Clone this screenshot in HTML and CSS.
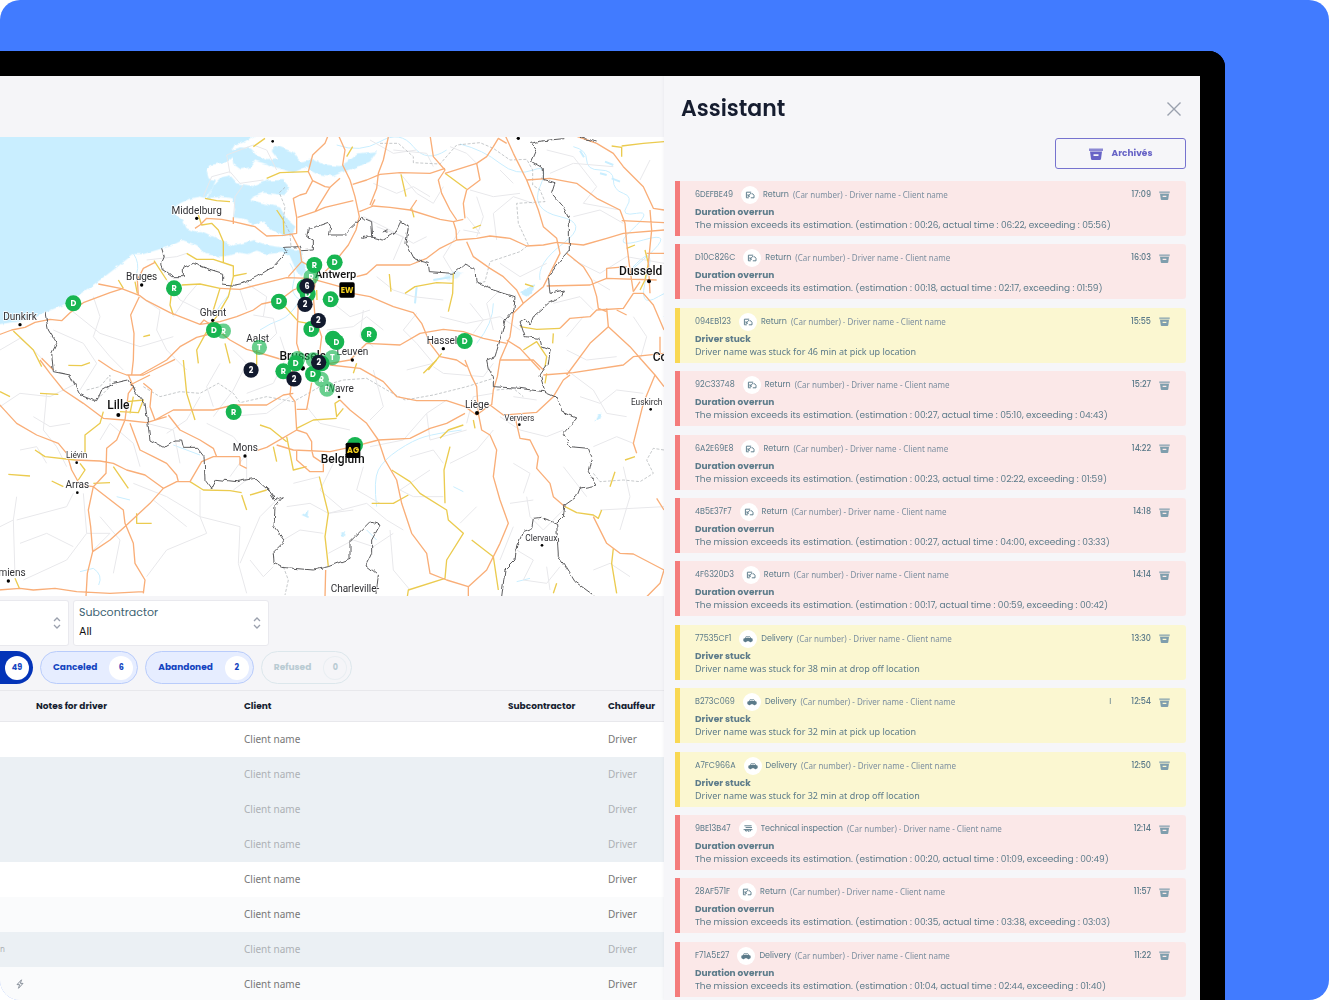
FILE: index.html
```html
<!DOCTYPE html>
<html lang="en">
<head>
  <meta charset="UTF-8" />
  <title>Dispatch - Assistant</title>
  <meta name="viewport" content="width=device-width, initial-scale=1.0" />
  <link rel="stylesheet" href="styles.css">
</head>
<body>

  <!-- Icons -->
  <svg class="sprite" aria-hidden="true">
    <symbol id="i-archive" viewBox="0 0 14 12">
      <path d="M0 .5h14V3H0z" opacity=".75" />
      <path fill-rule="evenodd" d="M1 3.500h12l-1 7.500q-.2 1-1.200 1H3.200q-1 0-1.200-1zM4.500 6.200v1.800h5V6.200z" />
    </symbol>
    <symbol id="i-return" viewBox="0 0 12 10">
      <path d="M4.500 8.500H1.500V1.500H7.500M8 3.500h1.500l1.500 2v3H7M3.500 6.500l4-4M3.500 4v2.500H6" fill="none" stroke="currentColor" stroke-width="1.200" />
    </symbol>
    <symbol id="i-car" viewBox="0 0 14 10">
      <path fill-rule="evenodd" d="M3 3.500L4.200 1h5.300l1.700 2.500 2.300 1V8h-1.200a1.800 1.800 0 0 1-3.500 0H5.200a1.800 1.800 0 0 1-3.500 0H.5V4.500zM4.300 3.500h2.200V2H5zM7.500 3.500h2.400L9 2H7.500z" />
      <circle cx="3.500" cy="8" r="1.200" /><circle cx="10.500" cy="8" r="1.200" />
    </symbol>
    <symbol id="i-tech" viewBox="0 0 12 10">
      <path d="M1.500 1h9M3 3.200h8M.5 5.800h11M3 5.800v1.700h2V5.800M7 5.800v3M9 5.800v2" fill="none" stroke="currentColor" stroke-width="1.200" />
    </symbol>
    <symbol id="i-sort" viewBox="0 0 8 12">
      <path d="M1 4l3-3 3 3M1 8l3 3 3-3" fill="none" stroke="currentColor" stroke-width="1.300" />
    </symbol>
  </svg>

  <div class="stage">
    <div class="device">

      <main class="board">
        <svg class="map" viewBox="0 21 1992 1377" role="img" aria-label="Map of Belgium">
          <defs>
            <filter id="rough" x="0" y="0" width="100%" height="100%">
              <feTurbulence type="fractalNoise" baseFrequency="0.05" numOctaves="2" seed="4" />
              <feDisplacementMap in="SourceGraphic" scale="12" xChannelSelector="R" yChannelSelector="G" />
            </filter>
          </defs>
          <rect y="21" width="1992" height="1377" fill="#fff" />

          <!-- sea and delta -->
          <g class="water" filter="url(#rough)">
            <path d="M-10 10H775L735 34 704 45 694 62 700 78 684 92 655 101 628 106 620 124 626 146 648 150 640 168 628 188 616 204 598 200 570 206 540 220 520 235 530 258 548 270 560 295 584 305 604 303 640 320 700 347 740 336 760 330 800 345 850 353 905 362 918 420 905 440 890 425 870 380 850 368 800 372 770 362 745 372 720 368 690 376 660 380 620 372 590 345 548 330 512 348 485 356 430 372 400 372 350 412 300 450 240 492 200 520 135 548 90 563 60 574 -10 584Z" />
            <path d="M694 62L720 52 752 55 775 78 800 90 835 88 815 60 832 48 880 66 900 95 940 88 970 104 1020 108 1050 90 1075 70 1130 64 1110 95 1070 112 1030 125 1000 138 950 132 915 112 880 128 845 118 800 102 765 92 750 112 722 118 700 102Z" />
            <path d="M640 168L665 142 690 136 712 160 760 168 800 152 850 150 868 172 850 195 790 188 760 200 752 210 800 222 840 232 862 270 886 290 876 312 850 318 815 300 790 275 760 285 740 268 700 262 705 235 698 205 660 200 620 206Z" />
            <path d="M1330 440L1360 424 1390 425 1372 445 1345 452Z" opacity="0.5" />
            <path d="M1560 490L1590 470 1605 462 1600 480 1580 500Z" />
            <path d="M1784 875L1794 850 1808 848 1800 868ZM905 1155L928 1140 925 1165ZM1024 1204h14l-4 18-10-4z" />
          </g>
          <g class="river">
            <path d="M1010 45Q1080 70 1140 35T1240 50 1340 60M1380 42Q1450 60 1500 100T1600 120 1620 170 1680 260 1690 340 1620 450" />
            <path d="M1720 50Q1760 60 1760 90T1800 120 1840 150 1870 190 1880 230 1910 250 1895 300 1930 330 1940 380 1910 400 1940 440 1975 500 1992 560" />
            <path d="M870 400q20 30 10 60t20 50M780 600q30-20 60-30t60-60M640 560q20-40 50-70M400 370q20 30 10 60" />
            <path d="M1130 1130q-10-80 5-110t60-60 80-40 110-20M1480 520q0 60-50 120" />
            <path d="M240 1325l40-10q30 20 16 50M350 1100l40 10M520 945l80 30M1550 1355l40-10M1360 1070l30 15M1100 1200l30 30" />
            <path d="M1740 62l12 20M1815 95l25 10M1800 130l20 5M1835 145l25 10M1250 470l-5 50M1300 450l50-8" stroke-width="6" />
          </g>

          <!-- minor roads -->
          <g class="minor">
            <path d="M690 130L680 75 720 60 760 45 800 60 830 120M610 200L635 140 690 125 720 160 790 150M700 275L705 200 730 165M440 390L530 380 560 370M520 560L560 500 590 465M280 500L300 560 280 620 330 680 370 720M0 660L60 625 90 650 130 690M420 500L480 540 470 600 500 660 560 720" />
            <path d="M760 555L820 565 830 610 800 640M700 660L740 700 700 780 640 860M720 480L740 540M980 600L1060 590 1100 560 1150 600M1000 520L1050 560 1110 540M1090 260L1170 300 1240 340 1280 320M1090 540L1080 620 1120 650" />
            <path d="M1200 130L1250 190 1300 220 1330 170M1350 50L1400 70 1430 100M1410 180L1480 200 1560 190M1390 300L1440 310 1400 260M1490 330L1480 250 1540 200 1600 220M1380 300L1330 380 1360 430M1500 400L1560 440 1640 400M1180 60L1280 70 1300 110" />
            <path d="M1640 60L1720 80 1790 170 1750 220 1860 240M1650 130L1720 100 1840 110M1720 260L1800 240 1870 280M1720 390L1800 430 1880 380 1992 400M1660 520L1740 500 1780 540M1700 660L1760 690 1850 680M1560 600L1500 560 1400 580 1320 560" />
            <path d="M1250 550L1210 600 1250 640 1300 700 1220 720M1480 600L1460 520 1500 480M0 830L60 790 150 800 230 760M140 790L130 900 170 950 200 1010M50 1100L40 1170 0 1190M50 1170L200 1130 220 1090M40 1170L45 1340M250 1090L260 1210 200 1290 70 1350" />
            <path d="M280 1260L330 1210 260 1210M400 1060L500 1100 600 1160 720 1190M720 1190L715 1300 740 1390M600 1160L620 1210 500 1260 440 1340M600 1080L600 1160M830 1110L780 1160 720 1300M440 880L520 900 540 1000M620 880L700 920 740 970 690 1040" />
            <path d="M680 860L800 850 870 800M740 980L740 1050 700 1080M860 1130L930 1120 985 1150 1060 1140M985 1150L1100 1120 1160 1170 1210 1200M820 1310L790 1340 750 1290M880 1060L960 1040M985 1270L1060 1230 1120 1250 1180 1210" />
            <path d="M1170 1200L1180 1320 1230 1380M1110 950L1210 930 1280 850 1340 810M1280 850L1290 930 1400 900M1330 1100L1240 1100 1200 1080 1290 1020M1430 1130L1380 1180M1530 1120L1600 1110M1500 860L1560 900 1640 920 1690 900M1120 720L1150 830 1110 870" />
            <path d="M1580 1100L1590 1160 1630 1200 1690 1140M1550 1260L1600 1290 1570 1350 1640 1360 1680 1310M1500 1290L1540 1190M1640 1310L1650 1380M1780 1320L1830 1300 1890 1340M1800 1140L1992 1130M1780 950L1850 920 1900 940M1740 800L1800 820 1850 780 1930 790" />
            <path d="M1700 720L1780 780 1820 850 1880 860M1300 710L1330 730 1450 740 1480 700M1610 810L1540 800M1350 1000L1430 960 1480 900M1690 1010L1760 1100M1400 880L1420 800 1480 790M1860 1200L1890 1100 1870 1010M1540 1000L1590 1030 1570 1090" />
            <path d="M200 530L300 610 420 650 520 620M160 600L250 640 290 700 240 780M500 450L540 510 600 540M740 460L800 500 790 560M840 620L860 680 820 760 740 790M1110 30L1180 70 1250 60M1120 160L1190 190 1240 170 1290 200M1130 290L1210 320 1180 390M1430 200L1450 260 1430 320" />
            <path d="M1500 120L1540 160M1750 560L1700 620M1830 480L1780 450M1900 560L1940 620 1920 690M1950 90L1920 150M1130 440L1180 480 1240 500 1330 510M1410 520L1450 570 1420 610M100 860L150 890 210 880M60 960L110 950 140 1000M300 930L330 880 400 940 420 1010" />
            <path d="M600 800L560 870 500 910M660 700L620 770 640 830M920 830L960 880 1050 900M1000 1000L960 1080 1030 1140M1090 1010L1070 1080 1140 1120M60 1240L140 1210 220 1250M300 1160L360 1230 340 1330M460 1110L560 1190M850 1230L900 1200 970 1210M1230 980L1300 960 1330 1000" />
          </g>

          <!-- region limits -->
          <g class="limit">
            <path d="M855 172L838 188 855 230 850 270 870 310 873 352M1140 40L1195 40 1240 80 1240 98 1320 102 1370 45 1440 38 1480 55 1530 90 1580 88 1598 120 1598 165 1620 180 1635 215 1550 220 1555 280 1585 345 1560 365 1470 395 1455 455 1428 460" />
            <path d="M260 780L300 770 330 735 330 770 290 810M430 770L480 800 540 785 600 790 655 760 700 790 720 818 800 800 880 815 960 770 1030 750 1100 745 1160 780 1215 810 1300 795 1400 770 1480 745" />
            <path d="M1490 780L1540 775 1570 800M1780 1030L1800 1055 1870 1050 1920 1055 1960 1030 1940 990 1960 955 1992 960M850 1310L865 1350 855 1395" />
          </g>

          <!-- secondary roads -->
          <g class="second">
            <path d="M615 205L650 212 690 215M800 145L840 128 925 125M760 50L795 25M595 255L605 285 635 280 655 300 670 335 670 400M560 370L590 388 640 388 700 408 700 440 685 500 650 560 625 590M545 465L600 462 660 475 640 540M515 485L510 525 520 555M462 392L500 450M620 605L590 660 595 700M675 640L690 700M855 530L895 575 925 580M830 240L850 270 852 312M355 450L370 475M405 455L412 490M700 438L740 430M40 603L60 622 100 660 125 710M430 620l20-5M770 660v45" />
            <path d="M1203 133L1218 200M1335 130L1400 178M1235 235L1242 262M1215 490L1245 470 1310 458 1360 460M1360 430L1358 490 1345 545M1168 432L1173 485M1835 48L1865 52 1865 80M1865 48L1930 40 1992 35M1575 462L1600 470M1560 590L1610 598 1680 595M1570 660L1610 635 1640 680 1635 710M1880 355L1905 345M1935 360L1945 400 1935 450 1920 480M1325 670L1285 720M1660 610L1658 640M1040 80L1058 50M1418 295l25-10M950 480l1 30" />
            <path d="M0 785L30 800M120 790L175 793M205 706L245 707 270 698M550 690L560 790 585 870M310 845L300 880 255 915 255 970M105 960L135 980 225 990M25 1033L90 1038M155 1053L190 1070M240 1000L255 1020 235 1050M340 1010L385 1075M280 1060L330 1058M410 1150L410 1180 455 1180M570 1055L610 1080 690 1082 725 1088M725 1095L740 1140M750 1095L800 1080M780 885L810 895 860 935M820 950L830 995M860 920L880 1020 920 1010M890 895L940 870 1010 865M958 1040L975 1110 985 1150 975 1220 985 1310M45 1345L58 1375M360 845L415 848 430 810 380 815M390 850L400 800" />
            <path d="M1175 1020L1230 1055 1260 1090 1340 1140 1345 1170 1390 1210 1340 1290 1335 1345 1225 1380 1222 1400M1415 1230L1480 1280 1495 1380M1350 950L1332 1020 1335 1120M1115 1120L1180 1120 1225 1095M1320 925L1345 900 1390 885M1695 1130L1730 1148 1780 1155 1795 1165 1805 1140M1840 1255L1835 1300 1850 1390M1875 990L1905 980M1845 1025L1830 1070M1270 730L1310 690M1020 810L1005 820 1010 860 1030 835M1060 730L1070 700M1660 1390l10-30M1635 760l5-30M1420 870l5 25" />
          </g>

          <!-- motorways -->
          <g class="motorway">
            <path d="M-5 615L35 600 75 592 105 577 150 568 185 572 210 548 250 518 290 503 330 488 370 475M295 462L365 476 420 497 440 512 510 548 600 583 612 570 640 590 690 630 740 658 790 672 850 690M415 497L412 450 430 415 465 397M418 500L392 555 402 610 400 690 395 735M600 583L660 575 710 560 760 540 785 522 840 510 880 480 920 465M420 735L500 690 540 650 590 622 630 612M660 475L720 478 790 460 860 443 930 445 1020 470M585 295L600 285 620 265 665 268 700 275 765 290 800 318 850 316 890 310 890 262 880 205 900 195 918 190 938 152 925 125 938 75 975 40 985 15M938 152L975 170 990 172 1020 145M990 172L945 245 893 262M945 245L975 232 1060 212M875 312L900 360 905 395 865 440M905 395L950 420 940 500 945 560 965 620 955 700M895 520L890 640 905 690M700 262v20" />
            <path d="M1015 15L1035 60 1028 105 1050 150 1065 200 1078 260 1068 300 1045 345 1005 395 960 440M1058 163L1100 150 1140 133 1200 128 1290 130 1335 115M1165 21L1150 90 1135 130 1130 175 1110 225M1078 245L1120 228 1170 232 1230 240 1320 268 1360 275 1390 268M1230 240l20-30M1360 275L1368 300 1370 330M1070 440L1100 432 1130 405 1230 405 1280 385 1320 355 1370 330 1430 325 1470 318 1530 325 1580 348 1630 345 1670 337 1750 345 1820 325 1870 310 1992 300M1040 487L1110 500 1180 530 1240 548 1265 580 1290 640 1320 680 1370 690 1400 710M990 700L1050 690 1100 640 1200 645 1260 610 1330 598 1390 605 1450 625 1520 640" />
            <path d="M1290 15L1300 80 1335 120 1315 150 1325 190 1350 240 1370 270M1335 130L1430 100 1460 80 1480 50 1495 25 1520 40M1430 100L1440 150 1400 180 1390 220 1395 265M1515 15L1540 70 1560 110 1580 150 1600 200 1615 240 1630 290 1670 325 1680 370 1630 470 1570 520 1540 550 1530 620 1500 690 1492 740 1480 780 1475 825M1400 335L1420 380 1470 415 1510 440 1550 480 1570 520M1580 150L1650 145 1730 160 1790 205 1860 240 1875 280 1880 340 1890 420 1900 485M1640 468L1770 465 1820 445 1970 450M1700 370L1750 410 1775 450 1790 500 1795 535 1820 545M1680 595L1710 565 1770 560 1790 540 1870 535 1900 490 1930 490 1960 525 1992 600" />
            <path d="M1720 15L1790 40 1840 70 1870 110 1930 170 1960 235 1992 240M1865 272L1992 278M1950 240L1955 300 1945 400 1950 490M1820 535L1825 590 1770 640 1700 735M1825 590L1890 650 1925 690 1965 735 1930 820 1900 940 1910 970M1965 735L1992 770M1992 670L1900 680 1870 705 1720 728 1630 735M1500 690L1570 690 1600 690 1630 720M1520 630L1560 655 1620 720M1820 445v-30l60-5M1850 540l30 15M1980 690v-70M1900 485l20-30M1940 370h52M1115 228l10-20" />
            <path d="M120 690L150 730 190 780 250 820 310 865 370 870 440 878 500 860M-5 820L50 880 110 915 175 940 200 970 215 1020 240 1065M125 685L160 720M295 690L340 720 380 735 430 735 460 720 525 688M385 735L400 770 385 790 375 870 350 930 320 955 318 1030 280 1070 265 1140 272 1190 278 1265M390 765L450 735M430 760L455 780 450 830 465 870 520 840 580 840 640 840 700 825 800 825 850 795 880 790M880 700L870 795 885 815 890 900 800 952 770 962M720 980L640 980 605 995 570 1055 530 1055 490 1075 450 1120 380 1185 330 1230 278 1265 262 1330 258 1400M390 880L420 960 460 980 500 1000 530 1035 535 1055M225 990L300 993 340 1000 380 1020 435 1035 490 1075M505 855L540 900 600 930 640 955 650 980M240 1065L280 1070 370 1140 375 1180 400 1240 405 1300 435 1350 430 1390M-5 1380L60 1375 100 1380 165 1375 230 1385 330 1390 430 1385" />
            <path d="M890 900L920 910 935 935 935 960M830 945L880 960 990 965 1060 950 1135 930 1230 925 1290 895 1340 880 1395 850M890 960L890 990 930 1025 970 1025 970 1000 940 980 935 960M977 1320L975 1400M890 838h30l15-80M990 705L1080 715 1150 755 1190 800 1250 812 1340 812 1395 830 1430 855 1470 825 1510 855 1610 847 1660 800 1690 750 1710 735M1020 810L1050 840 1100 880 1135 930 1155 990 1190 1050 1205 1120 1235 1210 1280 1270 1290 1330 1340 1350 1405 1370 1405 1400M1395 690L1415 740 1430 770 1435 850 1445 900 1470 915 1490 960 1480 1040 1500 1110 1525 1180 1500 1240 1460 1320 1405 1370M1545 860L1560 925 1590 930 1615 980 1610 1015 1650 1060 1660 1100 1695 1130M1780 1160L1820 1240 1860 1270 1900 1272 1992 1320 1980 1360 1940 1400M1970 1105L1992 1140M720 980v25l20 10" />
          </g>

          <!-- country borders -->
          <g class="border" filter="url(#rough)">
            <path d="M485 355L493 380 485 398 490 420 515 440 550 440 550 412 580 400 620 415 668 430 668 462 700 466 730 460 770 440 820 410 860 365 850 352 900 350 905 362 940 360 940 330 920 320 925 298 985 277 992 290 988 315 1040 315 1050 295 1085 262 1115 275 1118 320 1085 325 1088 315 1150 330 1185 310 1202 275 1225 290 1218 340 1245 390 1285 400 1288 425 1360 430 1395 402 1425 415 1428 455 1480 480 1545 500 1542 540 1515 570 1500 630 1485 680 1460 690 1465 715 1480 740 1480 770 1560 775 1630 785 1665 800 1695 850 1730 865 1690 910 1710 950 1765 955 1775 980 1765 1025 1790 1065 1740 1075 1730 1100 1695 1125 1690 1160 1670 1180 1625 1162 1600 1165 1595 1195 1570 1205 1550 1250 1545 1290 1515 1320 1505 1400M1670 1180L1675 1280 1700 1315 1725 1355 1780 1395" />
            <path d="M1592 40L1610 60 1595 95 1630 115 1630 148 1665 158 1655 190 1690 230 1708 270 1708 360 1690 380 1645 440 1650 490 1690 480 1685 500 1645 520 1600 560 1590 585 1575 565 1560 575 1575 620 1620 625 1625 650 1650 660 1645 700 1620 735 1635 785M1592 40L1630 32 1690 26M1740 22L1790 36M1150 305l12-6 2 12z" />
            <path d="M135 548L145 600 170 640 155 670 160 725 210 735 240 795 290 815 305 780 340 760 385 750 410 790 435 820 445 890 450 930 490 952 525 930 545 930 550 952 590 952 612 980 615 1050 635 1077 650 1048 710 1055 765 1045 810 1085 825 1110 850 1100 825 1130 822 1190 855 1235 820 1270 822 1300 845 1312 940 1320 985 1310 1050 1285 1050 1235 1110 1175 1140 1185 1115 1230 1115 1270 1098 1305 1135 1335 1128 1395" />
          </g>

          <!-- towns -->
          <g class="town-dot">
            <circle cx="818" cy="34" r="4" /><circle cx="590" cy="265" r="5" /><circle cx="425" cy="465" r="5" /><circle cx="60" cy="584" r="5" />
            <circle cx="638" cy="571" r="5" /><circle cx="1057" cy="690" r="5" /><circle cx="1330" cy="656" r="5" /><circle cx="1947" cy="454" r="6" />
            <circle cx="355" cy="855" r="6" /><circle cx="230" cy="998" r="4" /><circle cx="232" cy="1088" r="4" /><circle cx="25" cy="1353" r="5" />
            <circle cx="735" cy="978" r="5" /><circle cx="1017" cy="801" r="4" /><circle cx="1431" cy="849" r="6" /><circle cx="1558" cy="884" r="4" />
            <circle cx="1626" cy="1246" r="4" /><circle cx="1952" cy="838" r="4" /><circle cx="1555" cy="25" r="5" /><circle cx="908" cy="715" r="7" />
          </g>
          <g class="town">
            <text x="590" y="251">Middelburg</text>
            <text x="425" y="451">Bruges</text>
            <text x="60" y="570">Dunkirk</text>
            <text x="639" y="557">Ghent</text>
            <text x="773" y="635">Aalst</text>
            <text x="1057" y="676">Leuven</text>
            <text x="1326" y="642">Hassel</text>
            <text x="736" y="963">Mons</text>
            <text x="232" y="1074">Arras</text>
            <text x="36" y="1339">miens</text>
            <text x="1020" y="787">Wavre</text>
            <text x="1431" y="833">Liège</text>
            <text x="1065" y="1385">Charleville-</text>
          </g>
          <g class="town small">
            <text x="230" y="984">Liévin</text>
            <text x="1558" y="872">Verviers</text>
            <text x="1624" y="1232">Clervaux</text>
            <text x="1940" y="825">Euskirch</text>
          </g>
          <g class="town big">
            <text x="1007" y="445" class="mid">Antwerp</text>
            <text x="355" y="838">Lille</text>
            <text x="908" y="691">Brussels</text>
            <text x="1028" y="999">Belgium</text>
            <text x="1922" y="434">Dusseld</text>
            <text x="1980" y="693">Co</text>
          </g>

          <!-- vehicles -->
          <g class="pin light">
            <g transform="translate(933 441)"><circle r="23" /><text y="8">R</text></g>
            <g transform="translate(670 603)"><circle r="23" /><text y="8">R</text></g>
            <g transform="translate(778 652)"><circle r="23" /><text y="8">T</text></g>
            <g transform="translate(997 683)"><circle r="23" /><text y="8">T</text></g>
            <g transform="translate(893 686)"><circle r="23" /></g>
            <g transform="translate(940 690)"><circle r="23" /></g>
            <g transform="translate(964 748)"><circle r="23" /><text y="8">R</text></g>
            <g transform="translate(981 777)"><circle r="23" /><text y="8">R</text></g>
          </g>
          <g class="pin">
            <g transform="translate(943 405)"><circle r="24" /><text y="8">R</text></g>
            <g transform="translate(1004 397)"><circle r="24" /><text y="8">D</text></g>
            <g transform="translate(913 472)"><circle r="24" /></g>
            <g transform="translate(923 492)"><circle r="24" /><text y="8">D</text></g>
            <g transform="translate(992 508)"><circle r="24" /><text y="8">D</text></g>
            <g transform="translate(837 515)"><circle r="24" /><text y="8">D</text></g>
            <g transform="translate(934 597)"><circle r="24" /><text y="8">D</text></g>
            <g transform="translate(522 475)"><circle r="24" /><text y="8">R</text></g>
            <g transform="translate(220 520)"><circle r="24" /><text y="8">D</text></g>
            <g transform="translate(642 600)"><circle r="24" /><text y="8">D</text></g>
            <g transform="translate(999 626)"><circle r="24" /></g>
            <g transform="translate(1009 636)"><circle r="24" /><text y="8">D</text></g>
            <g transform="translate(1107 614)"><circle r="24" /><text y="8">R</text></g>
            <g transform="translate(1394 633)"><circle r="24" /><text y="8">D</text></g>
            <g transform="translate(887 700)"><circle r="24" /><text y="8">D</text></g>
            <g transform="translate(965 700)"><circle r="24" /></g>
            <g transform="translate(850 724)"><circle r="24" /><text y="8">R</text></g>
            <g transform="translate(939 732)"><circle r="24" /><text y="8">D</text></g>
            <g transform="translate(701 846)"><circle r="24" /><text y="8">R</text></g>
            <g transform="translate(1065 945)"><circle r="24" /></g>
          </g>
          <g class="pin cluster">
            <g transform="translate(921 468)"><circle r="23" /><text y="8">6</text></g>
            <g transform="translate(915 523)"><circle r="23" /><text y="8">2</text></g>
            <g transform="translate(955 572)"><circle r="23" /><text y="8">2</text></g>
            <g transform="translate(956 697)"><circle r="23" /><text y="8">2</text></g>
            <g transform="translate(882 747)"><circle r="23" /><text y="8">2</text></g>
            <g transform="translate(753 720)"><circle r="23" /><text y="8">2</text></g>
          </g>
          <g class="depot">
            <g transform="translate(1041 480)"><rect x="-23" y="-23" width="46" height="46" rx="5" /><text y="8">EW</text></g>
            <g transform="translate(1059 961)"><rect x="-22" y="-23" width="44" height="46" rx="5" /><text y="8">AG</text></g>
          </g>
        </svg>

        <div class="filters">
          <div class="field cut">
            <select aria-label="Status"><option></option></select>
            <svg class="sort"><use href="#i-sort" /></svg>
          </div>
          <div class="field">
            <label for="sub">Subcontractor</label>
            <select id="sub"><option>All</option></select>
            <svg class="sort"><use href="#i-sort" /></svg>
          </div>
        </div>

        <div class="pills">
          <button class="pill active"><span>49</span></button>
          <button class="pill">Canceled <span>6</span></button>
          <button class="pill">Abandoned <span>2</span></button>
          <button class="pill" disabled>Refused <span>0</span></button>
        </div>

        <table class="missions">
          <thead>
            <tr><th class="c-note">Notes for driver</th><th class="c-client">Client</th><th class="c-sub">Subcontractor</th><th>Chauffeur</th></tr>
          </thead>
          <tbody>
            <tr><td></td><td>Client name</td><td></td><td>Driver</td></tr>
            <tr class="off"><td></td><td>Client name</td><td></td><td>Driver</td></tr>
            <tr class="off"><td></td><td>Client name</td><td></td><td>Driver</td></tr>
            <tr class="off"><td></td><td>Client name</td><td></td><td>Driver</td></tr>
            <tr><td></td><td>Client name</td><td></td><td>Driver</td></tr>
            <tr class="alt"><td></td><td>Client name</td><td></td><td>Driver</td></tr>
            <tr class="off"><td class="edge">n</td><td>Client name</td><td></td><td>Driver</td></tr>
            <tr class="alt"><td class="edge"><svg class="bolt" viewBox="0 0 8 10"><path d="M5.500.8L1 5.600h2.600L2.500 9.300 7 4.400H4.400z" /></svg></td><td>Client name</td><td></td><td>Driver</td></tr>
          </tbody>
        </table>
      </main>

      <aside class="assistant">
        <header class="assistant-head">
          <h1>Assistant</h1>
          <button class="close" aria-label="Close"><svg viewBox="0 0 14 14"><path d="M.5.5l13 13M13.500.5L.5 13.500" /></svg></button>
        </header>
        <button class="archive"><svg><use href="#i-archive" /></svg>Archivés</button>

        <ul class="alerts">
          <li class="alert">
            <div class="top">6DEFBE49 <i><svg><use href="#i-return" /></svg></i> Return <small>(Car number) - Driver name - Client name</small><time>17:09</time><svg class="box"><use href="#i-archive" /></svg></div>
            <h2>Duration overrun</h2>
            <p>The mission exceeds its estimation. (estimation : 00:26, actual time : 06:22, exceeding : 05:56)</p>
          </li>
          <li class="alert">
            <div class="top">D10C826C <i><svg><use href="#i-return" /></svg></i> Return <small>(Car number) - Driver name - Client name</small><time>16:03</time><svg class="box"><use href="#i-archive" /></svg></div>
            <h2>Duration overrun</h2>
            <p>The mission exceeds its estimation. (estimation : 00:18, actual time : 02:17, exceeding : 01:59)</p>
          </li>
          <li class="alert stuck">
            <div class="top">094EB123 <i><svg><use href="#i-return" /></svg></i> Return <small>(Car number) - Driver name - Client name</small><time>15:55</time><svg class="box"><use href="#i-archive" /></svg></div>
            <h2>Driver stuck</h2>
            <p>Driver name was stuck for 46 min at pick up location</p>
          </li>
          <li class="alert">
            <div class="top">92C33748 <i><svg><use href="#i-return" /></svg></i> Return <small>(Car number) - Driver name - Client name</small><time>15:27</time><svg class="box"><use href="#i-archive" /></svg></div>
            <h2>Duration overrun</h2>
            <p>The mission exceeds its estimation. (estimation : 00:27, actual time : 05:10, exceeding : 04:43)</p>
          </li>
          <li class="alert">
            <div class="top">6A2E69E8 <i><svg><use href="#i-return" /></svg></i> Return <small>(Car number) - Driver name - Client name</small><time>14:22</time><svg class="box"><use href="#i-archive" /></svg></div>
            <h2>Duration overrun</h2>
            <p>The mission exceeds its estimation. (estimation : 00:23, actual time : 02:22, exceeding : 01:59)</p>
          </li>
          <li class="alert">
            <div class="top">4B5E37F7 <i><svg><use href="#i-return" /></svg></i> Return <small>(Car number) - Driver name - Client name</small><time>14:18</time><svg class="box"><use href="#i-archive" /></svg></div>
            <h2>Duration overrun</h2>
            <p>The mission exceeds its estimation. (estimation : 00:27, actual time : 04:00, exceeding : 03:33)</p>
          </li>
          <li class="alert">
            <div class="top">4F6320D3 <i><svg><use href="#i-return" /></svg></i> Return <small>(Car number) - Driver name - Client name</small><time>14:14</time><svg class="box"><use href="#i-archive" /></svg></div>
            <h2>Duration overrun</h2>
            <p>The mission exceeds its estimation. (estimation : 00:17, actual time : 00:59, exceeding : 00:42)</p>
          </li>
          <li class="alert stuck">
            <div class="top">77535CF1 <i><svg><use href="#i-car" /></svg></i> Delivery <small>(Car number) - Driver name - Client name</small><time>13:30</time><svg class="box"><use href="#i-archive" /></svg></div>
            <h2>Driver stuck</h2>
            <p>Driver name was stuck for 38 min at drop off location</p>
          </li>
          <li class="alert stuck">
            <div class="top">B273C069 <i><svg><use href="#i-car" /></svg></i> Delivery <small>(Car number) - Driver name - Client name</small><b>I</b><time>12:54</time><svg class="box"><use href="#i-archive" /></svg></div>
            <h2>Driver stuck</h2>
            <p>Driver name was stuck for 32 min at pick up location</p>
          </li>
          <li class="alert stuck">
            <div class="top">A7FC966A <i><svg><use href="#i-car" /></svg></i> Delivery <small>(Car number) - Driver name - Client name</small><time>12:50</time><svg class="box"><use href="#i-archive" /></svg></div>
            <h2>Driver stuck</h2>
            <p>Driver name was stuck for 32 min at drop off location</p>
          </li>
          <li class="alert">
            <div class="top">9BE13B47 <i><svg><use href="#i-tech" /></svg></i> Technical inspection <small>(Car number) - Driver name - Client name</small><time>12:14</time><svg class="box"><use href="#i-archive" /></svg></div>
            <h2>Duration overrun</h2>
            <p>The mission exceeds its estimation. (estimation : 00:20, actual time : 01:09, exceeding : 00:49)</p>
          </li>
          <li class="alert">
            <div class="top">28AF571F <i><svg><use href="#i-return" /></svg></i> Return <small>(Car number) - Driver name - Client name</small><time>11:57</time><svg class="box"><use href="#i-archive" /></svg></div>
            <h2>Duration overrun</h2>
            <p>The mission exceeds its estimation. (estimation : 00:35, actual time : 03:38, exceeding : 03:03)</p>
          </li>
          <li class="alert">
            <div class="top">F71A5E27 <i><svg><use href="#i-car" /></svg></i> Delivery <small>(Car number) - Driver name - Client name</small><time>11:22</time><svg class="box"><use href="#i-archive" /></svg></div>
            <h2>Duration overrun</h2>
            <p>The mission exceeds its estimation. (estimation : 01:04, actual time : 02:44, exceeding : 01:40)</p>
          </li>
        </ul>
      </aside>

    </div>
  </div>
</body>
</html>
```
FILE: styles.css
```css
* { box-sizing: border-box; }
body {
  margin: 0;
  background: #fff;
  color: #161d30;
  font-family: "Poppins", "Inter", sans-serif;
}
h1, h2, p, ul { margin: 0; padding: 0; }
button, select { font-family: inherit; }
.sprite { display: none; }

.stage {
  height: 100vh;
  min-height: 600px;
  padding: 51px 104px 0 0;
  background: #417bff;
  border-radius: 20px;
  overflow: hidden;
}
.device {
  display: flex;
  height: 100%;
  background: #f5f5f8;
  border: solid #000;
  border-width: 25px 25px 0 0;
  border-top-right-radius: 16px;
  overflow: hidden;
}

/* left side: map + missions */
.board {
  flex: 1;
  min-width: 0;
  padding-top: 61px;
  overflow: hidden;
}
.map {
  display: block;
  width: 100%;
}
.water { fill: #c9eeff; }
.river, .minor, .limit, .second, .motorway, .border {
  fill: none;
  stroke-linejoin: round;
}
.river { stroke: #c9eeff; stroke-width: 3; }
.minor { stroke: #e8e8eb; stroke-width: 3; }
.limit { stroke: #a9adb1; stroke-width: 2; stroke-dasharray: 9 5; }
.second { stroke: #ebcb4f; stroke-width: 4; }
.motorway { stroke: #f9ae78; stroke-width: 4; }
.border { stroke: #5a5a5c; stroke-width: 3; }
.town {
  font-family: "Roboto", sans-serif;
  font-size: 30px;
  fill: #2f2f33;
  stroke: #fff;
  stroke-width: 4px;
  paint-order: stroke;
  text-anchor: middle;
}
.small { font-size: 25px; }
.big { font-size: 36px; font-weight: 500; fill: #111; }
.big .mid { font-size: 33px; }
.pin circle { fill: #17b551; }
.pin.light { opacity: 0.65; }
.pin.cluster circle { fill: #121a2e; }
.pin text, .depot text {
  font-size: 24px;
  font-weight: 700;
  fill: #fff;
  text-anchor: middle;
}
.depot text { fill: #f6d21f; }

.filters {
  display: flex;
  gap: 4px;
  padding-top: 4px;
}
.field {
  position: relative;
  width: 196px;
  height: 46px;
  padding: 4px 5px;
  background: #fff;
  border: 1px solid #e9e9ee;
  border-radius: 3px;
}
.field.cut {
  width: 69px;
  border-left: 0;
  border-radius: 0 3px 3px 0;
}
.field label {
  display: block;
  font-size: 11px;
  line-height: 15px;
  color: #3d6272;
}
.field select {
  display: block;
  width: 100%;
  height: 18px;
  margin-top: 2px;
  padding: 0;
  border: 0;
  background: none;
  appearance: none;
  font-size: 11px;
  line-height: 18px;
  color: #111;
}
.sort {
  position: absolute;
  right: 7px;
  top: 16px;
  width: 8px;
  height: 12px;
  color: #9aa0ad;
}

.pills {
  display: flex;
  gap: 7px;
  padding: 5px 0 6px;
}
.pill {
  display: flex;
  align-items: center;
  gap: 12px;
  height: 33px;
  padding: 0 4px 0 12px;
  border: 1px solid #b9ccfb;
  border-radius: 17px;
  background: #e6edff;
  color: #1344c0;
  font-size: 9px;
  font-weight: 700;
}
.pill span {
  width: 24px;
  border-radius: 50%;
  background: #fff;
  font-size: 8px;
  line-height: 24px;
  text-align: center;
}
.pill.active {
  padding-left: 5px;
  border: 0;
  border-radius: 0 17px 17px 0;
  background: #0434b8;
}
.pill:disabled {
  background: none;
  border-color: #dce7ec;
  color: #b9cbd3;
}
.pill:disabled span {
  background: none;
  box-shadow: inset 0 0 0 1px #e9eef2;
}

.missions {
  width: 100%;
  border-collapse: collapse;
  table-layout: fixed;
  border-top: 1px solid #e8e8ec;
}
.missions th {
  height: 31px;
  padding: 0;
  border-bottom: 1px solid #e8e8ec;
  font-size: 9px;
  font-weight: 700;
  text-align: left;
}
.missions td {
  height: 35px;
  padding: 0;
  font-family: "Noto Sans", sans-serif;
  font-size: 10px;
  color: #777;
  line-height: 16px;
}
.missions .c-note { width: 244px; padding-left: 36px; }
.missions .c-client { width: 264px; }
.missions .c-sub { width: 100px; }
.missions tbody tr { background: #fff; }
.missions tbody .alt { background: #fafbfc; }
.missions tbody .off { background: #ebf0f4; }
.missions .off td { color: #adb1b4; }
.missions .edge { font-size: 8px; }
.bolt {
  display: block;
  width: 8px;
  height: 10px;
  margin-left: 16px;
  fill: none;
  stroke: #8a929c;
}

/* right side: assistant */
.assistant {
  display: flex;
  flex-direction: column;
  width: 536px;
  padding: 18px 14px 3px 11px;
  background: #f6f6f9;
  box-shadow: 0 0 3px rgba(40, 50, 80, 0.08);
}
.assistant-head {
  display: flex;
  align-items: center;
  justify-content: space-between;
  padding: 0 5px 0 6px;
}
.assistant-head h1 {
  font-size: 22px;
  line-height: 30px;
  font-weight: 600;
}
.close {
  padding: 0;
  border: 0;
  background: none;
}
.close svg {
  display: block;
  width: 14px;
  height: 14px;
  stroke: #9aa1ad;
  stroke-width: 1.4px;
}
.archive {
  display: flex;
  align-items: center;
  justify-content: center;
  gap: 9px;
  align-self: flex-end;
  width: 131px;
  height: 31px;
  flex: none;
  margin: 14px 0 12px;
  border: 1px solid #7673cf;
  border-radius: 3px;
  background: none;
  color: #6763c6;
  font-size: 9px;
  font-weight: 700;
}
.archive svg {
  width: 14px;
  height: 12px;
  fill: currentColor;
}
.alerts {
  display: flex;
  flex: 1;
  flex-direction: column;
  justify-content: space-between;
  list-style: none;
}
.alert {
  padding: 5px 16px 5px 15px;
  border-left: 5px solid #f47c7c;
  border-radius: 0 3px 3px 0;
  background: #fbe8e8;
  color: #5c7b8a;
}
.alert.stuck {
  background: #fbf7d1;
  border-color: #f9d853;
}
.alert .top {
  display: flex;
  align-items: center;
  gap: 4px;
  margin-bottom: 2px;
  font-size: 8px;
  line-height: 18px;
}
.alert .top i {
  display: flex;
  align-items: center;
  justify-content: center;
  width: 18px;
  height: 18px;
  margin-left: 4px;
  border-radius: 50%;
  background: #fff;
}
.alert .top i svg {
  width: 10px;
  height: 8px;
  fill: currentColor;
}
.alert small {
  font-family: "Noto Sans", sans-serif;
  font-size: 8px;
  color: #7d8fa0;
}
.alert b { margin-left: auto; font-weight: 400; }
.alert time { margin-left: auto; font-weight: 500; }
.alert b + time { margin-left: 16px; }
.alert .box {
  width: 11px;
  height: 9px;
  margin-left: 4px;
  fill: #7f9ead;
}
.alert h2 {
  font-size: 9px;
  line-height: 13px;
  font-weight: 700;
}
.alert p {
  font-size: 9px;
  line-height: 12px;
}
.alert.stuck p { font-family: "Noto Sans", sans-serif; }
```
